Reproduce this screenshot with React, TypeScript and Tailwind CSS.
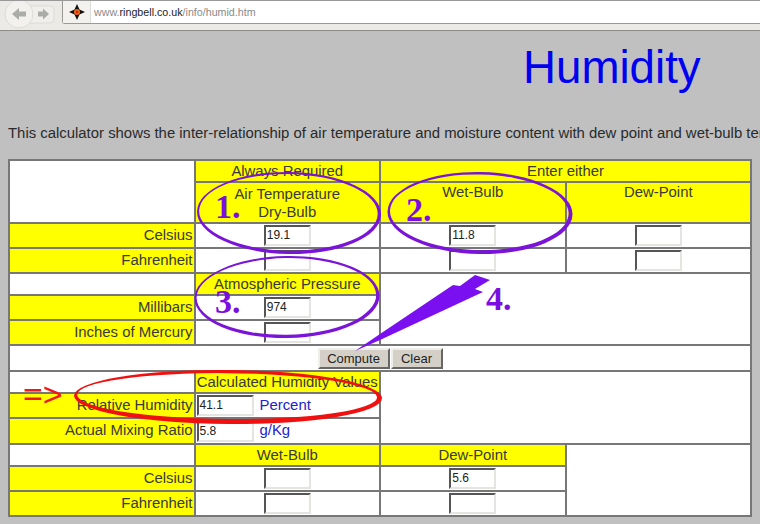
import React from "react";

const Field = ({ value = "", wide = false }: { value?: string; wide?: boolean }) => (
  <div
    className={`inline-block align-middle h-[21px] bg-white border-2 border-t-[#555] border-l-[#555] border-r-[#e4e4e0] border-b-[#e4e4e0] text-[12px] leading-[17px] pl-[1px] text-left text-[#222] ${
      wide ? "w-[57px]" : "w-[47px]"
    }`}
  >
    {value}
  </div>
);

const Label = ({ children }: { children: React.ReactNode }) => (
  <td className="border-2 border-[#777] bg-[#ffff00] text-right pr-[1px] pb-[2px] text-[#3a3a3a]">{children}</td>
);
const Head = ({ children, colSpan }: { children: React.ReactNode; colSpan?: number }) => (
  <td colSpan={colSpan} className="border-2 border-[#777] bg-[#ffff00] text-center text-[#3a3a3a]">
    {children}
  </td>
);
const Cell = ({ children, colSpan, rowSpan, left }: { children?: React.ReactNode; colSpan?: number; rowSpan?: number; left?: boolean }) => (
  <td colSpan={colSpan} rowSpan={rowSpan} className={`border-2 border-[#777] bg-white ${left ? "text-left pl-[1px]" : "text-center"}`}>
    {children}
  </td>
);
const Btn = ({ children, w }: { children: React.ReactNode; w: string }) => (
  <button className={`${w} h-[21px] bg-[#d4d0c8] border-2 border-t-[#eeeeea] border-l-[#eeeeea] border-r-[#666] border-b-[#666] text-[13px] leading-[15px] text-[#222]`}>
    {children}
  </button>
);

const arc = (cx: number, cy: number, rx: number, ry: number) =>
  `M${cx - rx} ${cy} A${rx} ${ry} 0 1 0 ${cx + rx} ${cy} A${rx} ${ry} 0 1 0 ${cx - rx} ${cy} Z`;

const Ring = ({ cx, cy, rx, ry, w, color, tilt = 0 }: { cx: number; cy: number; rx: number; ry: number; w: number; color: string; tilt?: number }) => (
  <path
    d={`${arc(cx, cy, rx, ry)} ${arc(cx - w * 0.2, cy - w * 0.2, rx - w * 0.9, ry - w * 0.9)}`}
    fill={color}
    fillRule="evenodd"
    transform={`rotate(${tilt} ${cx} ${cy})`}
  />
);

export default function App() {
  return (
    <div className="relative w-[760px] h-[524px] overflow-hidden bg-[#c0c0c0] font-['Liberation_Sans',Arial,sans-serif]">
      {/* browser toolbar */}
      <div className="h-[31px] bg-[#ebeae6] border-t border-t-[#999] border-b border-b-[#8f8d88] flex items-start">
        <div className="relative w-[62px] h-[29px] shrink-0">
          <svg width="62" height="29" viewBox="0 0 62 29" className="block">
            <path d="M27 5 H50 Q54 5 54 9 V18 Q54 22 50 22 H27 Z" fill="#f0efeb" stroke="#dcdbd6" />
            <circle cx="19" cy="13" r="14" fill="#f2f1ed" stroke="#dddcd7" />
            <path d="M12 13 L19 7 V10.5 H26 V15.5 H19 V19 Z" fill="#a9aca9" />
            <path d="M49 13 L43 7.5 V10.5 H38 V15.5 H43 V18.5 Z" fill="#a9aca9" />
          </svg>
        </div>
        <div className="flex-1 h-[23px] bg-white border border-[#9a9994] border-t-0 border-r-0 rounded-bl-[3px] flex items-center">
          <div className="w-[28px] h-full bg-[#f3f2ee] border-r border-[#dcdcd8] flex items-center justify-center shrink-0">
            <svg width="18" height="18" viewBox="0 0 18 18">
              <path d="M9 1 L11.5 6.5 L17 9 L11.5 11.5 L9 17 L6.5 11.5 L1 9 L6.5 6.5 Z" fill="#111" />
              <circle cx="9" cy="9" r="3" fill="#ee6611" />
              <circle cx="9" cy="9" r="1.2" fill="#cc2211" />
            </svg>
          </div>
          <div className="pl-[3px] text-[10.7px] text-[#8a8a8a] whitespace-nowrap">
            www.<span className="text-[#222]">ringbell.co.uk</span>/info/humid.htm
          </div>
        </div>
      </div>

      {/* page */}
      <h1 className="pl-[523px] pt-[8px] text-[45.7px] leading-[58px] font-normal text-[#0000f0] whitespace-nowrap">Humidity</h1>
      <p className="pl-[8px] pt-[27px] text-[14.9px] leading-[18px] text-[#2a2a2a] whitespace-nowrap">
        This calculator shows the inter-relationship of air temperature and moisture content with dew point and wet-bulb temperature
      </p>

      <table className="absolute left-[8px] top-[159px] w-[742px] table-fixed border-collapse text-[14.9px] leading-[18px]">
        <colgroup>
          <col className="w-[185.5px]" />
          <col className="w-[185.5px]" />
          <col className="w-[185.5px]" />
          <col className="w-[185.5px]" />
        </colgroup>
        <tbody>
          <tr className="h-[22px]">
            <Cell rowSpan={2} />
            <Head>Always Required</Head>
            <Head colSpan={2}>Enter either</Head>
          </tr>
          <tr className="h-[41px]">
            <Head>
              Air Temperature
              <br />
              Dry-Bulb
            </Head>
            <td className="border-2 border-[#777] bg-[#ffff00] text-center align-top text-[#3a3a3a]">Wet-Bulb</td>
            <td className="border-2 border-[#777] bg-[#ffff00] text-center align-top text-[#3a3a3a]">Dew-Point</td>
          </tr>
          <tr className="h-[25px]">
            <Label>Celsius</Label>
            <Cell><Field value="19.1" /></Cell>
            <Cell><Field value="11.8" /></Cell>
            <Cell><Field /></Cell>
          </tr>
          <tr className="h-[25px]">
            <Label>Fahrenheit</Label>
            <Cell><Field /></Cell>
            <Cell><Field /></Cell>
            <Cell><Field /></Cell>
          </tr>
          <tr className="h-[22px]">
            <Cell />
            <Head>Atmospheric Pressure</Head>
            <Cell colSpan={2} rowSpan={3} />
          </tr>
          <tr className="h-[25px]">
            <Label>Millibars</Label>
            <Cell><Field value="974" /></Cell>
          </tr>
          <tr className="h-[25px]">
            <Label>Inches of Mercury</Label>
            <Cell><Field /></Cell>
          </tr>
          <tr className="h-[26px]">
            <Cell colSpan={4}>
              <div className="flex justify-center gap-[1px]">
                <Btn w="w-[72px]">Compute</Btn>
                <Btn w="w-[52px]">Clear</Btn>
              </div>
            </Cell>
          </tr>
          <tr className="h-[22px]">
            <Cell />
            <Head>Calculated Humidity Values</Head>
            <Cell colSpan={2} rowSpan={3} />
          </tr>
          <tr className="h-[25px]">
            <Label>Relative Humidity</Label>
            <Cell left>
              <Field value="41.1" wide />
              <span className="ml-[6px] align-middle text-[#2222cc] relative -top-px">Percent</span>
            </Cell>
          </tr>
          <tr className="h-[26px]">
            <Label>Actual Mixing Ratio</Label>
            <Cell left>
              <Field value="5.8" wide />
              <span className="ml-[6px] align-middle text-[#2222cc] relative -top-px">g/Kg</span>
            </Cell>
          </tr>
          <tr className="h-[22px]">
            <Cell />
            <Head>Wet-Bulb</Head>
            <Head>Dew-Point</Head>
            <Cell rowSpan={3} />
          </tr>
          <tr className="h-[25px]">
            <Label>Celsius</Label>
            <Cell><Field /></Cell>
            <Cell><Field value="5.6" /></Cell>
          </tr>
          <tr className="h-[25px]">
            <Label>Fahrenheit</Label>
            <Cell><Field /></Cell>
            <Cell><Field /></Cell>
          </tr>
        </tbody>
      </table>

      {/* hand-drawn annotations */}
      <svg width="760" height="524" viewBox="0 0 760 524" className="absolute left-0 top-0 pointer-events-none">
        <Ring cx={289} cy={213} rx={92} ry={41} w={3} color="#7a14d8" tilt={1} />
        <Ring cx={480} cy={213} rx={92.5} ry={41} w={3.5} color="#7a14d8" tilt={1} />
        <Ring cx={287} cy={297} rx={92.5} ry={41} w={3} color="#7a14d8" tilt={-1} />
        <Ring cx={228} cy={397} rx={154} ry={27} w={4.5} color="#f01010" tilt={0.5} />
        <polygon points="355,351 380,340 483,292 475,289 490,280 475,275 460,286 453,285 380,334" fill="#7a10f0" />
      </svg>
      <div className="absolute left-[215px] top-[187px] text-[34px] leading-[40px] font-bold text-[#7a10e0] font-['Liberation_Serif',serif]">1.</div>
      <div className="absolute left-[406px] top-[190px] text-[34px] leading-[40px] font-bold text-[#7a10e0] font-['Liberation_Serif',serif]">2.</div>
      <div className="absolute left-[215px] top-[282px] text-[34px] leading-[40px] font-bold text-[#7a10e0] font-['Liberation_Serif',serif]">3.</div>
      <div className="absolute left-[486px] top-[279px] text-[34px] leading-[40px] font-bold text-[#7a10e0] font-['Liberation_Serif',serif]">4.</div>
      <div className="absolute left-[23px] top-[375px] text-[34px] leading-[38px] font-normal text-[#f01818] font-['Liberation_Sans',sans-serif]">=&gt;</div>
    </div>
  );
}
